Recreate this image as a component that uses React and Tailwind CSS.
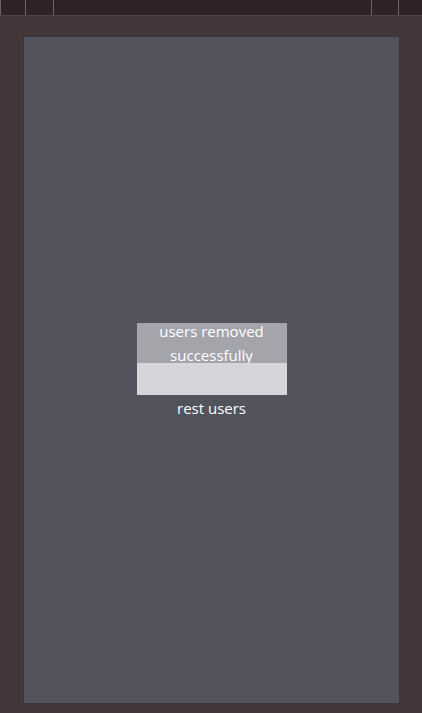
export default function App() {
  return (
    <div className="w-[422px] h-[713px] bg-[#433739] flex flex-col overflow-hidden" style={{ fontFamily: '"Open Sans", "Noto Sans", sans-serif' }}>
      {/* top strip */}
      <div className="h-[16px] bg-[#2e2225] flex border-b border-[#4d4245]">
        <div className="w-px bg-[#6e6266]" />
        <div className="w-[24px]" />
        <div className="w-px bg-[#6e6266]" />
        <div className="w-[27px]" />
        <div className="w-px bg-[#6e6266]" />
        <div className="flex-1" />
        <div className="w-px bg-[#6e6266]" />
        <div className="w-[26px]" />
        <div className="w-px bg-[#6e6266]" />
        <div className="w-[23px]" />
      </div>

      <div className="pl-[23px] pt-[20px]">
        <div className="w-[377px] h-[668px] bg-[#52535c] border border-[#38383c] flex flex-col items-center justify-center">
          <div className="w-[150px] flex flex-col mt-[3px]">
            <div className="h-[40px] bg-[#a4a4ab] flex items-center justify-center overflow-hidden">
              <p className="text-white text-[15px] leading-[24px] text-center">users removed successfully</p>
            </div>
            <div className="h-[32px] bg-[#d6d5d9]" />
          </div>
          <p className="text-white text-[15px] leading-[24px] mt-[1px]">rest users</p>
        </div>
      </div>
    </div>
  );
}
